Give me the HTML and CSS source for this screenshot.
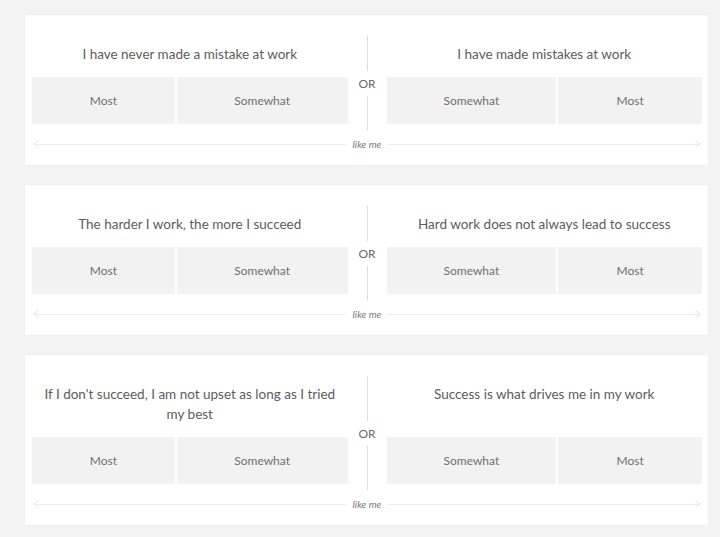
FILE: index.html
```html
<!DOCTYPE html>
<html lang="en">
<head>
    <meta charset="UTF-8">
    <meta name="viewport" content="width=device-width, initial-scale=1.0">
    <title>Work Style Survey</title>
    <link rel="stylesheet" href="styles.css">
</head>
<body>

    <div class="survey">

        <!-- Question 1 -->
        <div class="card">
            <div class="pair">
                <div class="side">
                    <div class="statement">I have never made a mistake at work</div>
                    <div class="choices choices-left">
                        <div class="choice">Most</div>
                        <div class="choice">Somewhat</div>
                    </div>
                </div>
                <div class="divider">
                    <span class="rule"></span>
                    <span class="or">OR</span>
                    <span class="rule"></span>
                </div>
                <div class="side">
                    <div class="statement">I have made mistakes at work</div>
                    <div class="choices choices-right">
                        <div class="choice">Somewhat</div>
                        <div class="choice">Most</div>
                    </div>
                </div>
            </div>
            <div class="scale">
                <svg class="arrow" width="6" height="8" viewBox="0 0 6 8"><polyline points="5.5,0.5 0.8,4 5.5,7.5" /></svg>
                <span class="scale-line"></span>
                <span class="scale-label">like me</span>
                <span class="scale-line"></span>
                <svg class="arrow" width="6" height="8" viewBox="0 0 6 8"><polyline points="0.5,0.5 5.2,4 0.5,7.5" /></svg>
            </div>
        </div>

        <!-- Question 2 -->
        <div class="card">
            <div class="pair">
                <div class="side">
                    <div class="statement">The harder I work, the more I succeed</div>
                    <div class="choices choices-left">
                        <div class="choice">Most</div>
                        <div class="choice">Somewhat</div>
                    </div>
                </div>
                <div class="divider">
                    <span class="rule"></span>
                    <span class="or">OR</span>
                    <span class="rule"></span>
                </div>
                <div class="side">
                    <div class="statement">Hard work does not always lead to success</div>
                    <div class="choices choices-right">
                        <div class="choice">Somewhat</div>
                        <div class="choice">Most</div>
                    </div>
                </div>
            </div>
            <div class="scale">
                <svg class="arrow" width="6" height="8" viewBox="0 0 6 8"><polyline points="5.5,0.5 0.8,4 5.5,7.5" /></svg>
                <span class="scale-line"></span>
                <span class="scale-label">like me</span>
                <span class="scale-line"></span>
                <svg class="arrow" width="6" height="8" viewBox="0 0 6 8"><polyline points="0.5,0.5 5.2,4 0.5,7.5" /></svg>
            </div>
        </div>

        <!-- Question 3 -->
        <div class="card">
            <div class="pair">
                <div class="side">
                    <div class="statement">If I don't succeed, I am not upset as long as I tried my best</div>
                    <div class="choices choices-left">
                        <div class="choice">Most</div>
                        <div class="choice">Somewhat</div>
                    </div>
                </div>
                <div class="divider">
                    <span class="rule"></span>
                    <span class="or">OR</span>
                    <span class="rule"></span>
                </div>
                <div class="side">
                    <div class="statement">Success is what drives me in my work</div>
                    <div class="choices choices-right">
                        <div class="choice">Somewhat</div>
                        <div class="choice">Most</div>
                    </div>
                </div>
            </div>
            <div class="scale">
                <svg class="arrow" width="6" height="8" viewBox="0 0 6 8"><polyline points="5.5,0.5 0.8,4 5.5,7.5" /></svg>
                <span class="scale-line"></span>
                <span class="scale-label">like me</span>
                <span class="scale-line"></span>
                <svg class="arrow" width="6" height="8" viewBox="0 0 6 8"><polyline points="0.5,0.5 5.2,4 0.5,7.5" /></svg>
            </div>
        </div>

    </div>

</body>
</html>
```

FILE: styles.css
```css
body {
    margin: 0;
    background-color: #f3f3f3;
    font-family: Lato, "Open Sans", sans-serif;
    color: #5c5c5c;
}
.survey {
    padding: 15px 12px 0 25px;
}
.card {
    background-color: #fff;
    margin-bottom: 20px;
    padding: 21px 6px 14px 7px;
    box-shadow: 0 0 2px rgba(0, 0, 0, 0.06);
}
.pair {
    display: flex;
}
.side {
    flex: 1;
    display: flex;
    flex-direction: column;
    padding: 8px 0 6px;
}
.statement {
    flex: 1;
    font-size: 13.5px;
    line-height: 20px;
    text-align: center;
    padding: 0 10px;
    margin-bottom: 13px;
}
.choices {
    display: grid;
    gap: 2px;
    height: 47px;
}
.choices-left { grid-template-columns: 143fr 171fr; }
.choices-right { grid-template-columns: 170fr 144fr; }
.choice {
    background-color: #f2f2f2;
    display: flex;
    align-items: center;
    justify-content: center;
    font-size: 12px;
    color: #707070;
}
.divider {
    width: 39px;
    display: flex;
    flex-direction: column;
    align-items: center;
}
.rule {
    flex: 1;
    width: 1px;
    background-color: #dcdcdc;
}
.or {
    font-size: 12px;
    line-height: 25px;
    color: #6a6a6a;
}
.scale {
    display: flex;
    align-items: center;
    height: 14px;
    margin-top: 7px;
    padding: 0 1px;
}
.scale-line {
    flex: 1;
    height: 1px;
    background-color: #ececec;
}
.scale-label {
    font-size: 10px;
    font-style: italic;
    color: #7a7a7a;
    padding: 0 7px;
}
.arrow {
    fill: none;
    stroke: #e2e2e2;
    stroke-width: 1;
    margin: 0 -5px 0 0;
}
.arrow:last-child {
    margin: 0 0 0 -5px;
}
```
